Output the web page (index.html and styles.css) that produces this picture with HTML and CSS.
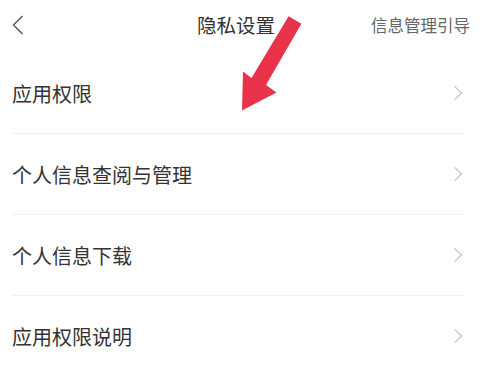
FILE: index.html
```html
<!DOCTYPE html>
<html lang="zh-CN">
<head>
  <meta charset="UTF-8">
  <meta name="viewport" content="width=device-width, initial-scale=1.0">
  <title>隐私设置</title>
  <link rel="stylesheet" href="styles.css">
</head>
<body>
  <div class="page">
    <!-- Barra superiore -->
    <div class="top-bar">
      <span class="back">
        <svg width="12" height="20" viewBox="0 0 12 20"><path d="M10.5 1 L1.5 10 L10.5 19" fill="none" stroke="#555" stroke-width="1.4"/></svg>
      </span>
      <h1 class="title">隐私设置</h1>
      <span class="guide">信息管理引导</span>
    </div>

    <!-- Elenco voci -->
    <ul class="menu-list">
      <li class="menu-item"><span>应用权限</span><i class="chevron"></i></li>
      <li class="menu-item"><span>个人信息查阅与管理</span><i class="chevron"></i></li>
      <li class="menu-item"><span>个人信息下载</span><i class="chevron"></i></li>
      <li class="menu-item"><span>应用权限说明</span><i class="chevron"></i></li>
    </ul>

    <!-- Freccia rossa sovrapposta -->
    <svg class="arrow" width="483" height="367" viewBox="0 0 483 367">
      <polygon points="288.6,16.2 301.4,23.8 266,85 276.5,92.5 242,110.5 243,71.5 251.5,78" fill="#e8334a"/>
    </svg>
  </div>
</body>
</html>
```

FILE: styles.css
```css
body {
  margin: 0;
  background-color: #fff;
  font-family: "Noto Sans CJK SC", "Noto Sans", sans-serif;
}
.page {
  position: relative; /* per la freccia sovrapposta */
  width: 483px;
  height: 367px;
  overflow: hidden;
}
.top-bar {
  height: 53px;
  display: grid;
  grid-template-columns: 1fr auto 1fr;
  align-items: center;
  padding: 0 13px 4px 12px;
  box-sizing: border-box;
}
.back {
  display: flex;
  align-items: center;
}
.title {
  margin: 0 10px 0 0;
  font-size: 19.5px;
  font-weight: normal;
  color: #333;
}
.guide {
  justify-self: end;
  font-size: 16.5px;
  color: #666;
}
.menu-list {
  list-style: none;
  margin: 0 19px 0 12px;
  padding: 0;
}
.menu-item {
  height: 80px;
  display: flex;
  align-items: center;
  justify-content: space-between;
  border-bottom: 1px solid #f0f0f0;
  font-size: 20px;
  color: #333;
}
/* Freccia a destra di ogni voce */
.chevron {
  width: 9px;
  height: 9px;
  border-top: 1.4px solid #bbb;
  border-right: 1.4px solid #bbb;
  transform: rotate(45deg);
  margin-right: 4px;
}
.arrow {
  position: absolute;
  top: 0;
  left: 0;
}
```
